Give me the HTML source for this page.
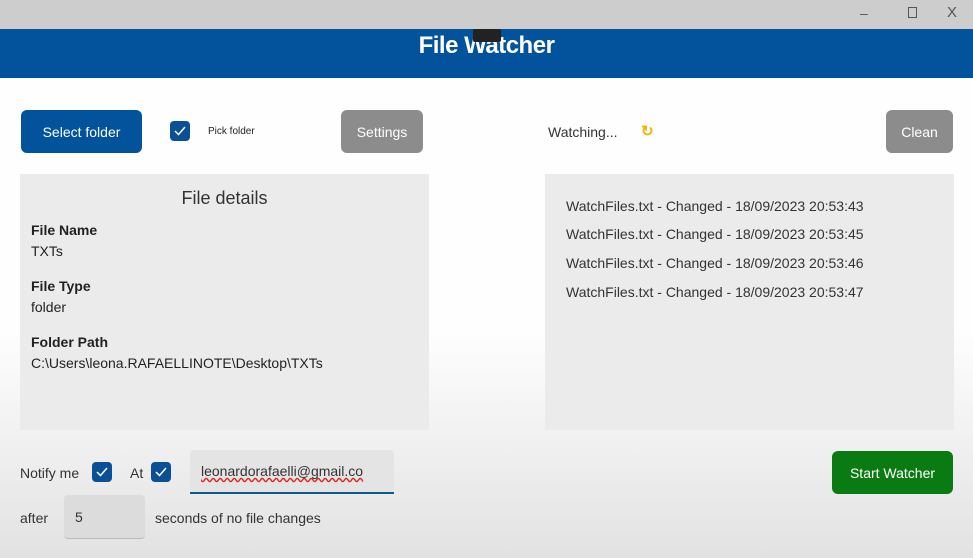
<!DOCTYPE html>
<html><head><style>
*{box-sizing:border-box;margin:0;padding:0}
body{width:973px;height:558px;overflow:hidden;font-family:"Liberation Sans",sans-serif;position:relative;background:linear-gradient(#fefefe 0,#fefefe 330px,#e2e2e2 558px);color:#222}
.a{position:absolute}
.btn{position:absolute;border-radius:6px;color:#fff;font-size:14px;display:flex;align-items:center;justify-content:center}
.cb{position:absolute;width:20px;height:20px;background:#0b4f96;border-radius:4px}
.cb svg{position:absolute;left:4px;top:5px}
.panel{position:absolute;background:#ebebeb}
.lbl{font-weight:bold;font-size:14px;position:absolute;left:11px}
.val{font-size:14px;position:absolute;left:11px}
.log{position:absolute;left:21px;font-size:14px;color:#333}
</style></head><body>
<div class="a" style="left:0;top:0;width:973px;height:29px;background:#cdcdcd"></div>
<div class="a" style="left:860px;top:5px;font-size:14px;color:#555">–</div>
<div class="a" style="left:908px;top:7px;width:9px;height:11px;border:1px solid #555"></div>
<div class="a" style="left:947px;top:4px;font-size:15px;color:#555">X</div>
<div class="a" style="left:0;top:29px;width:973px;height:49px;background:#02529c"></div>
<div class="a" style="left:0;top:32px;width:973px;text-align:center;color:#fff;font-size:24px;font-weight:bold;letter-spacing:-0.5px">File Watcher</div>
<div class="a" style="left:473px;top:29px;width:28px;height:13px;background:#222;border-radius:2px"></div>
<div class="btn" style="left:21px;top:110px;width:121px;height:43px;background:#02529c">Select folder</div>
<div class="cb" style="left:170px;top:121px"><svg width="12" height="10"><path d="M1 5l3.5 3.5L11 1" stroke="#fff" stroke-width="1.5" fill="none"/></svg></div>
<div class="a" style="left:208px;top:126px;font-size:10px">Pick folder</div>
<div class="btn" style="left:341px;top:110px;width:82px;height:43px;background:#8c8c8c">Settings</div>
<div class="a" style="left:548px;top:124px;font-size:14px;color:#333">Watching...</div>
<div class="a" style="left:641px;top:122px;color:#f0b400;font-size:15px;font-weight:bold">↻</div>
<div class="btn" style="left:886px;top:110px;width:67px;height:43px;background:#8c8c8c">Clean</div>
<div class="panel" style="left:20px;top:174px;width:409px;height:256px">
<div class="a" style="left:0;top:14px;width:409px;text-align:center;font-size:18px;color:#333">File details</div>
<div class="lbl" style="top:48px">File Name</div><div class="val" style="top:69px">TXTs</div>
<div class="lbl" style="top:104px">File Type</div><div class="val" style="top:125px">folder</div>
<div class="lbl" style="top:160px">Folder Path</div><div class="val" style="top:181px">C:\Users\leona.RAFAELLINOTE\Desktop\TXTs</div>
</div>
<div class="panel" style="left:545px;top:174px;width:409px;height:256px">
<div class="log" style="top:24px">WatchFiles.txt - Changed - 18/09/2023 20:53:43</div>
<div class="log" style="top:52px">WatchFiles.txt - Changed - 18/09/2023 20:53:45</div>
<div class="log" style="top:81px">WatchFiles.txt - Changed - 18/09/2023 20:53:46</div>
<div class="log" style="top:110px">WatchFiles.txt - Changed - 18/09/2023 20:53:47</div>
</div>
<div class="a" style="left:20px;top:465px;font-size:14px;color:#333">Notify me</div>
<div class="cb" style="left:92px;top:462px"><svg width="12" height="10"><path d="M1 5l3.5 3.5L11 1" stroke="#fff" stroke-width="1.5" fill="none"/></svg></div>
<div class="a" style="left:130px;top:465px;font-size:14px;color:#333">At</div>
<div class="cb" style="left:151px;top:462px"><svg width="12" height="10"><path d="M1 5l3.5 3.5L11 1" stroke="#fff" stroke-width="1.5" fill="none"/></svg></div>
<div class="a" style="left:190px;top:450px;width:204px;height:44px;background:#e4e4e4;border-radius:4px 4px 0 0;border-bottom:2px solid #0e5a8a"></div>
<div class="a" style="left:201px;top:463px;font-size:14px;color:#333;text-decoration:underline wavy #d22;text-decoration-skip-ink:none">leonardorafaelli@gmail.co</div>
<div class="a" style="left:20px;top:510px;font-size:14px;color:#333">after</div>
<div class="a" style="left:64px;top:495px;width:81px;height:44px;background:#dcdcdc;border-radius:4px;border-bottom:1px solid #bbb"></div>
<div class="a" style="left:75px;top:509px;font-size:14px;color:#333">5</div>
<div class="a" style="left:155px;top:510px;font-size:14px;color:#333">seconds of no file changes</div>
<div class="btn" style="left:832px;top:451px;width:121px;height:43px;background:#0a7a12">Start Watcher</div>
</body></html>
